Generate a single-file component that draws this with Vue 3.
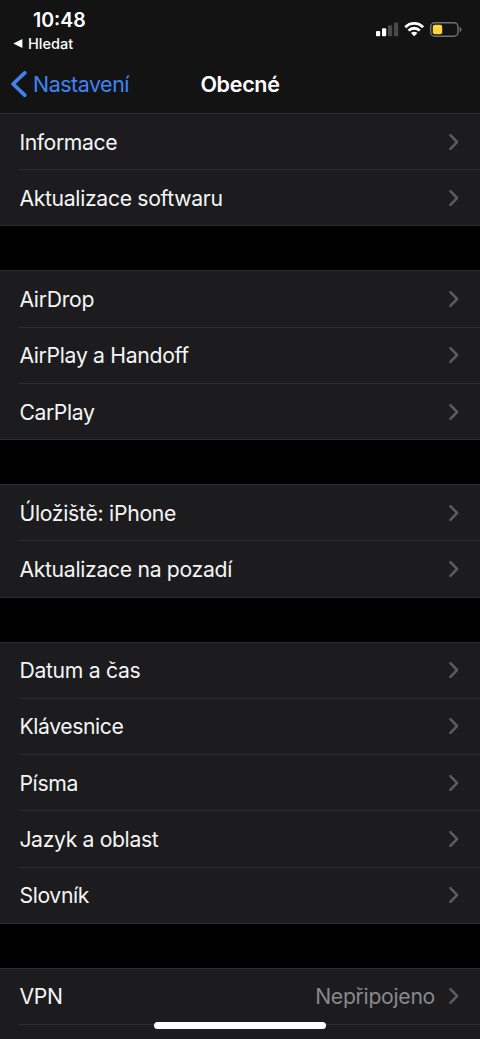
<script setup>
const groups = [
  [
    { label: 'Informace', tracking: -0.4 },
    { label: 'Aktualizace softwaru', tracking: -0.33 },
  ],
  [
    { label: 'AirDrop', tracking: -0.3 },
    { label: 'AirPlay a Handoff', tracking: -0.32 },
    { label: 'CarPlay', tracking: -0.4 },
  ],
  [
    { label: 'Úložiště: iPhone', tracking: -0.28 },
    { label: 'Aktualizace na pozadí', tracking: -0.32 },
  ],
  [
    { label: 'Datum a čas', tracking: -0.3 },
    { label: 'Klávesnice', tracking: -0.4 },
    { label: 'Písma', tracking: -0.3 },
    { label: 'Jazyk a oblast', tracking: -0.36 },
    { label: 'Slovník', tracking: -0.35 },
  ],
  [
    { label: 'VPN', value: 'Nepřipojeno', tracking: -0.3 },
    { label: '', tracking: 0 },
  ],
]
</script>

<template>
  <div class="screen">
    <header class="top">
      <div class="status">
        <div class="left">
          <div class="time">10:48</div>
          <div class="return">
            <svg width="10" height="9" viewBox="0 0 10 9"><path d="M0.3 4.5 9.4 0.1V8.9Z" fill="#fff" /></svg>
            <span>Hledat</span>
          </div>
        </div>
        <svg class="indicators" width="90" height="18" viewBox="0 0 90 18">
          <g fill="#fff">
            <rect x="1" y="11" width="4.2" height="5.3" rx="1.1" />
            <rect x="7" y="8.2" width="4.2" height="8.1" rx="1.1" />
            <g fill="#49494b">
              <rect x="13" y="5.2" width="4.2" height="11.1" rx="1.1" />
              <rect x="19" y="2.6" width="4.2" height="13.7" rx="1.1" />
            </g>
          </g>
          <g fill="none" stroke="#fff" stroke-width="2.8">
            <path d="M30.3 7.2a12.3 12.3 0 0 1 17.8 0" />
            <path d="M33.6 10.6a7.8 7.8 0 0 1 11.2 0" />
          </g>
          <path d="M39.2 16.2 36 13a4.6 4.6 0 0 1 6.4 0Z" fill="#fff" />
          <rect x="55.7" y="2.8" width="27.3" height="13.4" rx="4" fill="none" stroke="#737375" stroke-width="1.4" />
          <rect x="57.8" y="4.7" width="9.4" height="9.6" rx="2" fill="#fdd53c" />
          <path d="M84.7 7v5q1.9-.8 1.9-2.5T84.7 7" fill="#737375" />
        </svg>
      </div>
      <nav class="nav">
        <div class="back">
          <svg width="17" height="28" viewBox="0 0 17 28"><path d="M14.7 2.9 3.1 14l11.6 11.1" fill="none" stroke="#4084f4" stroke-width="3.7" stroke-linecap="round" stroke-linejoin="round" /></svg>
          <span>Nastavení</span>
        </div>
        <h1>Obecné</h1>
      </nav>
    </header>
    <main>
      <section v-for="(group, i) in groups" :key="i" class="group">
        <div v-for="item in group" :key="item.label" class="row">
          <span class="label" :style="{ letterSpacing: item.tracking + 'px' }">{{ item.label }}</span>
          <span v-if="item.value" class="value">{{ item.value }}</span>
          <svg class="chevron" width="12" height="18" viewBox="0 0 12 18"><path d="M2.4 2.2 9.1 9l-6.7 6.8" fill="none" stroke="#5b5b5f" stroke-width="2.5" stroke-linecap="round" stroke-linejoin="round" /></svg>
        </div>
      </section>
    </main>
    <div class="home"></div>
  </div>
</template>

<style>
body { background: #000; }
</style>

<style scoped>
.screen {
  position: relative;
  height: 1039px;
  overflow: hidden;
  background: #000;
  color: #f5f5f6;
  font-family: Inter, "Liberation Sans", sans-serif;
}
.top { height: 113px; background: #131313; }
.status {
  display: flex;
  justify-content: space-between;
  height: 57px;
}
.left { padding: 8px 0 0 13px; color: #fff; }
.time {
  padding-left: 20px;
  font-size: 19.5px;
  line-height: 24px;
  font-weight: 600;
}
.return {
  display: flex;
  align-items: center;
  gap: 5px;
  height: 22px;
  font-size: 14.5px;
  font-weight: 500;
}
.indicators { margin: 20px 15px 0 0; }
.nav {
  display: grid;
  grid-template-columns: 1fr auto 1fr;
  align-items: center;
  height: 54px;
}
.back {
  display: flex;
  align-items: center;
  gap: 6px;
  padding-left: 10px;
  color: #4084f4;
  font-size: 21.4px;
  letter-spacing: -0.45px;
}
h1 {
  margin: 0;
  color: #fff;
  font-size: 21.5px;
  font-weight: 600;
  letter-spacing: -0.3px;
}
main { display: flex; flex-direction: column; gap: 44px; }
.group {
  border-top: 1px solid #2e2e30;
  border-bottom: 1px solid #2e2e30;
  background: #1c1c1e;
}
.row {
  display: flex;
  align-items: center;
  box-sizing: border-box;
  height: 56.25px;
  margin-left: 19px;
  padding: 0 20px 0 0.4px;
  border-bottom: 1px solid #2e2e30;
  font-size: 21.2px;
  line-height: 28px;
  white-space: nowrap;
}
.row:last-child { height: 55.2px; border-bottom: 0; }
.label { flex: 1; }
.value { margin-right: 13px; color: #88888d; letter-spacing: -0.3px; }
.home {
  position: absolute;
  left: 154px;
  top: 1022px;
  width: 172px;
  height: 7px;
  border-radius: 4px;
  background: #fff;
}
</style>
